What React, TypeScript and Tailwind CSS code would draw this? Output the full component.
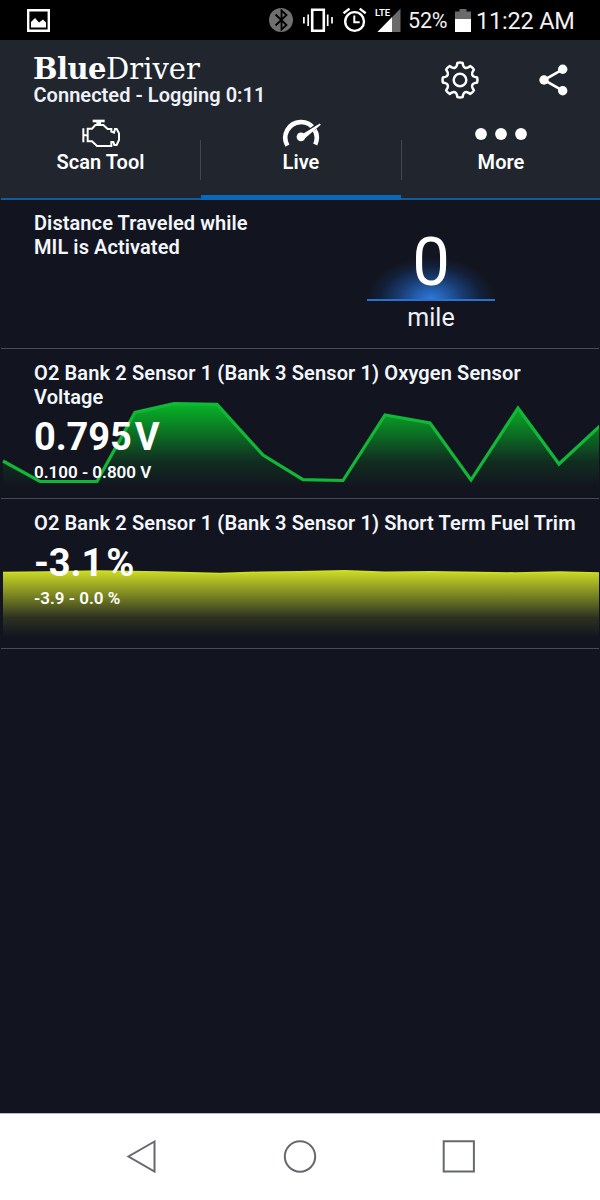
import type { ReactNode } from "react";

type Point = [number, number];

// Chart points are in row coordinates: 600 wide, 150 high.
const VOLTAGE: Point[] = [
  [3, 112], [40, 132.5], [97, 132.5], [135, 63.5], [174, 54.7], [217, 55.3], [263, 106], [303, 130.7],
  [343, 131.5], [385, 66], [430, 74], [471, 131], [518, 59], [559, 115], [600, 77],
];

const FUEL_TRIM: Point[] = [
  [3, 73.5], [45, 73], [100, 72], [160, 73], [220, 74.5], [260, 73.3], [300, 72.8], [345, 71.8],
  [385, 73.2], [430, 72.8], [480, 73.6], [515, 74], [560, 73], [600, 74],
];

const toPath = (points: Point[]) => points.map(([x, y], i) => `${i ? "L" : "M"}${x} ${y}`).join(" ");

function gearPath(cx: number, cy: number) {
  const at = (deg: number, r: number) => {
    const a = (deg * Math.PI) / 180;
    return `${(cx + r * Math.cos(a)).toFixed(2)} ${(cy + r * Math.sin(a)).toFixed(2)}`;
  };
  let d = "";
  for (let i = 0; i < 8; i++) {
    const t = i * 45 - 90;
    d += `${i ? "L" : "M"}${at(t - 12, 15)} L${at(t - 8.5, 17.3)} Q${at(t, 17.9)} ${at(t + 8.5, 17.3)} L${at(t + 12, 15)} `;
    d += `Q${at(t + 22.5, 11.8)} ${at(t + 33, 15)} `;
  }
  return `${d}Z`;
}

export default function App() {
  return (
    <div className="flex h-[1200px] w-[600px] flex-col overflow-hidden bg-[#12151f] font-['Roboto',sans-serif] text-white">
      <StatusBar />
      <header className="flex h-40 flex-col bg-[#20252e]">
        <div className="flex h-[75px] justify-between pl-[33px] pr-7">
          <div className="pt-[11px]">
            <div className="flex h-8 items-center whitespace-nowrap pt-[3px] font-['DejaVu_Serif',serif] text-[29px] leading-8">
              <span className="font-bold tracking-[-0.5px]">Blue</span>
              <span>Driver</span>
            </div>
            <div className="whitespace-nowrap pl-[0.5px] text-[20px] font-semibold leading-6 tracking-[0.03px] text-[#eef1f8]">
              Connected - Logging 0:11
            </div>
          </div>
          <div className="flex items-start gap-[58px] pt-5">
            <svg width="40" height="40" fill="none" stroke="#fff" strokeWidth="2.5" strokeLinejoin="round">
              <path d={gearPath(20, 20)} />
              <circle cx="20" cy="20" r="6.3" />
            </svg>
            <svg width="34" height="40" fill="#fff">
              <path d="M24.7 9.3 6 20l18.7 10.7" fill="none" stroke="#fff" strokeWidth="2.6" />
              <circle cx="24.7" cy="9.3" r="4.7" />
              <circle cx="6" cy="20" r="4.7" />
              <circle cx="24.7" cy="30.7" r="4.7" />
            </svg>
          </div>
        </div>
        <nav className="grid flex-1 grid-cols-[199px_1px_200px_1px_198px] pl-px">
          <Tab label="Scan Tool" icon={<EngineIcon />} />
          <Separator />
          <Tab label="Live" icon={<GaugeIcon />} active />
          <Separator />
          <Tab label="More" icon={<DotsIcon />} />
        </nav>
      </header>

      <main className="flex-1">
        <section className="mx-px flex h-[149px] border-b border-[#484b54] pl-[33px] pt-[11px]">
          <h2 className="w-[333px] text-[20px] font-semibold leading-6 tracking-[0.08px] text-[#f3f6fc]">
            Distance Traveled while
            <br />
            MIL is Activated
          </h2>
          <div className="flex w-32 flex-col items-center">
            <div className="flex h-[90px] w-full justify-center border-b-2 border-[#2e6fcb] bg-[radial-gradient(64px_42px_at_50%_100%,#2f78dc_0%,#235cab_25%,#193c71_50%,#13203a_78%,transparent_100%)] pt-[13px] text-[67px] leading-[76px]">
              0
            </div>
            <div className="mt-px text-[25px] leading-8 text-[#eef1f8]">mile</div>
          </div>
        </section>
        <SensorRow
          id="voltage"
          title="O2 Bank 2 Sensor 1 (Bank 3 Sensor 1) Oxygen Sensor Voltage"
          value="0.795"
          unit="V"
          range="0.100 - 0.800 V"
          points={VOLTAGE}
          color="#12b737"
          fill="#06c828"
          fadeFrom={52}
          fadeTo={138}
          lineWidth={3.2}
        />
        <SensorRow
          id="trim"
          title="O2 Bank 2 Sensor 1 (Bank 3 Sensor 1) Short Term Fuel Trim"
          value="-3.1"
          unit="%"
          range="-3.9 - 0.0 %"
          points={FUEL_TRIM}
          color="#cfdf25"
          fill="#d6e626"
          fadeFrom={73}
          fadeTo={138}
          lineWidth={1.6}
        />
      </main>

      <footer className="flex h-[87px] items-center border-t border-[#b9bbbf] bg-white pl-[126px]">
        <svg width="350" height="36" fill="none" stroke="#66696b" strokeWidth="2">
          <path d="M28.5 2.5 2.5 17.5l26 15z" />
          <circle cx="174" cy="17.5" r="15.2" />
          <path d="M317.7 2.3h30.2v30.2h-30.2z" />
        </svg>
      </footer>
    </div>
  );
}

function StatusBar() {
  return (
    <div className="flex h-10 items-center bg-black">
      <svg className="ml-[27px]" width="23" height="40">
        <path d="M1.2 10.2h20.6v20.6H1.2z" fill="none" stroke="#fff" strokeWidth="2.4" />
        <path d="M4 27.5V22l4-4 4 4.5 4-3 3 3v5z" fill="#fff" />
      </svg>
      <svg className="ml-[219px]" width="24" height="40">
        <circle cx="12" cy="20" r="12" fill="#707070" />
        <path d="m6.5 14.5 11 10.5-5 4.5v-19l5 4.5-11 10.5" fill="none" stroke="#000" strokeWidth="1.8" />
      </svg>
      <svg className="ml-[10px]" width="30" height="40" fill="none" stroke="#fff">
        <path d="M9.2 9.7h11.6v21.1H9.2z" strokeWidth="2.6" />
        <path d="M.9 17v6.5M5.2 14.5V26M24.7 14.5V26M29 17v6.5" strokeWidth="1.7" />
      </svg>
      <svg className="ml-[9px]" width="25" height="40" fill="none" stroke="#fff">
        <circle cx="12.6" cy="21.5" r="9.4" strokeWidth="2.4" />
        <path d="m1.5 13.2 6-4.6M17.7 8.6l6 4.6" strokeWidth="2.4" />
        <path d="M12.3 15.5v6.8h5.4" strokeWidth="2" />
      </svg>
      <svg className="ml-[8px]" width="26" height="40">
        <path d="M25.5 8.5V32H2.5z" fill="#6a6a6a" />
        <path d="M17 17.2V32H2.5z" fill="#fff" />
        <path d="M0 7h16.5v10H0z" fill="#000" />
        <text x="0" y="16" fill="#fff" fontSize="9.5" fontWeight="600" letterSpacing="-0.1">
          LTE
        </text>
      </svg>
      <span className="ml-[7px] w-[39px] whitespace-nowrap pt-0.5 text-[21.5px] leading-10 tracking-[-0.2px] text-[#f1f1f1]">52%</span>
      <svg className="ml-[8px]" width="16" height="40">
        <path d="M4.5 9h7v2.5H16V20H0v-8.5h4.5z" fill="#6a6a6a" />
        <path d="M0 19h16v13H0z" fill="#fff" />
      </svg>
      <span className="ml-[5px] whitespace-nowrap pt-0.5 text-[23.5px] leading-10 tracking-[-0.2px] text-[#f1f1f1]">11:22 AM</span>
    </div>
  );
}

function Tab({ label, icon, active = false }: { label: string; icon: ReactNode; active?: boolean }) {
  return (
    <div
      className={
        active
          ? "flex flex-col items-center border-b-[5px] border-[#0b68b7]"
          : "flex flex-col items-center border-b-2 border-[#165b96]"
      }
    >
      {icon}
      <span className="mt-[-1px] text-[20px] font-semibold leading-6 tracking-[0.05px]">{label}</span>
    </div>
  );
}

function Separator() {
  return (
    <div className="border-b-2 border-[#165b96]">
      <div className="mt-[25px] h-10 bg-[#43464f]" />
    </div>
  );
}

function EngineIcon() {
  return (
    <svg className="shrink-0" width="40" height="36" viewBox="242 0 120 108" fill="none" stroke="#fff" strokeWidth="6">
      <path d="M277 18h36" strokeWidth="8" />
      <path d="M288 25h14" strokeWidth="10" />
      <path d="M249 40v42M249 61h12" />
      <path d="M262 41h13l10-11h24l13 12h11v8l8 3 3-11h5l7 13v20l-7 15h-7l-3-9h-6v12h-43l-15-14h-13z" />
    </svg>
  );
}

function GaugeIcon() {
  return (
    <svg className="shrink-0" width="40" height="36" fill="none" stroke="#fff">
      <path d="M6.4 30.6A15.7 15.7 0 1 1 34.2 29.5" strokeWidth="4.6" />
      <path d="M20 22.2 39.5 8.2" stroke="#20252e" strokeWidth="4.4" />
      <path d="m20.8 19.4 18-11 1 1.4-16.4 14z" fill="#fff" stroke="none" />
      <circle cx="20" cy="21.8" r="4.4" fill="#fff" stroke="none" />
    </svg>
  );
}

function DotsIcon() {
  return (
    <svg className="shrink-0" width="54" height="36" fill="#fff">
      <circle cx="7" cy="19" r="5.9" />
      <circle cx="27" cy="19" r="5.9" />
      <circle cx="47" cy="19" r="5.9" />
    </svg>
  );
}

function SensorRow({
  id,
  title,
  value,
  unit,
  range,
  points,
  color,
  fill,
  fadeFrom,
  fadeTo,
  lineWidth,
}: {
  id: string;
  title: string;
  value: string;
  unit: string;
  range: string;
  points: Point[];
  color: string;
  fill: string;
  fadeFrom: number;
  fadeTo: number;
  lineWidth: number;
}) {
  const line = toPath(points);
  return (
    <section className="relative mx-px h-[150px] border-b border-[#484b54]">
      <svg className="absolute left-0 top-0" width="598" height="149" viewBox="1 0 598 149">
        <defs>
          <linearGradient id={id} gradientUnits="userSpaceOnUse" x1="0" x2="0" y1={fadeFrom} y2={fadeTo}>
            <stop offset="0" stopColor={fill} stopOpacity="0.93" />
            <stop offset="0.35" stopColor={fill} stopOpacity="0.54" />
            <stop offset="0.7" stopColor={fill} stopOpacity="0.14" />
            <stop offset="1" stopColor={fill} stopOpacity="0" />
          </linearGradient>
        </defs>
        <path d={`${line} V149 H3 Z`} fill={`url(#${id})`} />
        <path d={line} fill="none" stroke={color} strokeWidth={lineWidth} />
      </svg>
      <div className="relative pl-[33px] pt-3">
        <h2 className="w-[550px] text-[20px] font-semibold leading-6 tracking-[0.12px] text-[#f3f6fc]">{title}</h2>
        <div className="mt-1 flex gap-[3px] text-[38px] font-bold leading-[48px] tracking-[-0.1px]">
          <span>{value}</span>
          <span>{unit}</span>
        </div>
        <div className="mt-px text-[17px] font-semibold leading-5">{range}</div>
      </div>
    </section>
  );
}
